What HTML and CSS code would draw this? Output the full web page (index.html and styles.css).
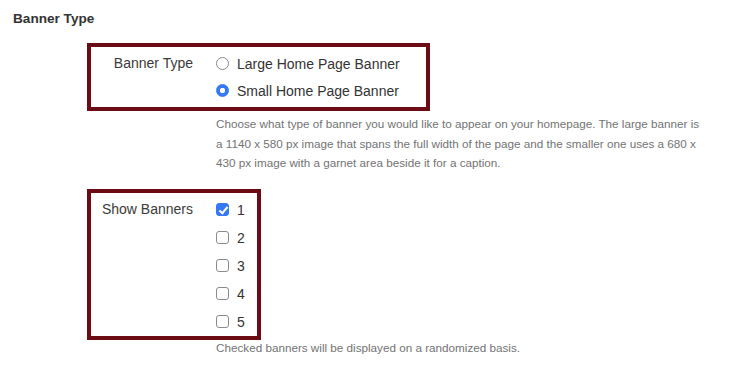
FILE: index.html
```html
<!DOCTYPE html>
<html lang="en">
<head>
  <meta charset="utf-8">
  <title>Banner Type</title>
  <link rel="stylesheet" href="styles.css">
</head>
<body>
  <div class="settings">
    <h3 class="section-title">Banner Type</h3>

    <!-- Banner type -->
    <div class="field">
      <div class="field-box field-box--type">
        <div class="field-label">Banner Type</div>
        <div class="field-controls">
          <label class="option">
            <input type="radio" name="banner_type" value="large">
            <span>Large Home Page Banner</span>
          </label>
          <label class="option">
            <input type="radio" name="banner_type" value="small" checked>
            <span>Small Home Page Banner</span>
          </label>
        </div>
      </div>
      <p class="field-help">Choose what type of banner you would like to appear on your homepage. The large banner is a 1140 x 580 px image that spans the full width of the page and the smaller one uses a 680 x 430 px image with a garnet area beside it for a caption.</p>
    </div>

    <!-- Show banners -->
    <div class="field field--banners">
      <div class="field-box field-box--show">
        <div class="field-label">Show Banners</div>
        <div class="field-controls">
          <label class="option option--check"><input type="checkbox" checked><span>1</span></label>
          <label class="option option--check"><input type="checkbox"><span>2</span></label>
          <label class="option option--check"><input type="checkbox"><span>3</span></label>
          <label class="option option--check"><input type="checkbox"><span>4</span></label>
          <label class="option option--check"><input type="checkbox"><span>5</span></label>
        </div>
      </div>
      <p class="field-help field-help--tight">Checked banners will be displayed on a randomized basis.</p>
    </div>
  </div>
</body>
</html>
```

FILE: styles.css
```css
html, body {
  margin: 0;
  padding: 0;
}

body {
  font-family: 'Liberation Sans', Arial, sans-serif;
  background: #fff;
  color: #333;
}

.settings {
  padding: 11px 13px;
}

.section-title {
  margin: 0;
  font-size: 13.6px;
  line-height: 16px;
  font-weight: bold;
  color: #333;
}

/* Fields */
.field {
  margin-left: 74px;
}

.field:first-of-type {
  margin-top: 16px;
}

.field--banners {
  margin-top: 16px;
}

.field-box {
  display: inline-flex;
  border: 4px solid #6d0b15;
  font-size: 14px;
}

.field-box--type {
  padding: 3px 26px 3px 0;
}

.field-box--show {
  padding: 3px 12px 0 0;
}

.field-label {
  width: 102px;
  margin-right: 23px;
  text-align: right;
  color: #3a3a3a;
}

.field-box--type .field-label {
  line-height: 27px;
}

.field-box--show .field-label {
  line-height: 26px;
}

.field-controls {
  display: flex;
  flex-direction: column;
}

.option {
  display: flex;
  align-items: center;
  height: 27px;
  color: #333;
}

.option--check {
  height: 28px;
}

.option span {
  margin-left: 8px;
}

/* Inputs */
.option input {
  -webkit-appearance: none;
  appearance: none;
  margin: 0;
  width: 13px;
  height: 13px;
  box-sizing: border-box;
  border: 1px solid #8a8a8a;
  background: #fff;
  position: relative;
}

.option input[type="radio"] {
  border-radius: 50%;
}

.option input[type="radio"]:checked {
  border-color: #3478f6;
  background: radial-gradient(circle, #fff 0 2.4px, #3478f6 3px);
}

.option input[type="checkbox"] {
  border-radius: 3px;
}

.option input[type="checkbox"]:checked {
  border-color: #3478f6;
  background: #3478f6;
}

.option input[type="checkbox"]:checked::after {
  content: '';
  position: absolute;
  left: 3.5px;
  top: 0.5px;
  width: 3px;
  height: 7px;
  border: solid #fff;
  border-width: 0 2px 2px 0;
  transform: rotate(40deg);
}

/* Help text */
.field-help {
  margin: 3px 0 0 129px;
  max-width: 490px;
  font-size: 11.7px;
  line-height: 19.5px;
  color: #737373;
}

.field-help--tight {
  margin-top: -2px;
}
```
